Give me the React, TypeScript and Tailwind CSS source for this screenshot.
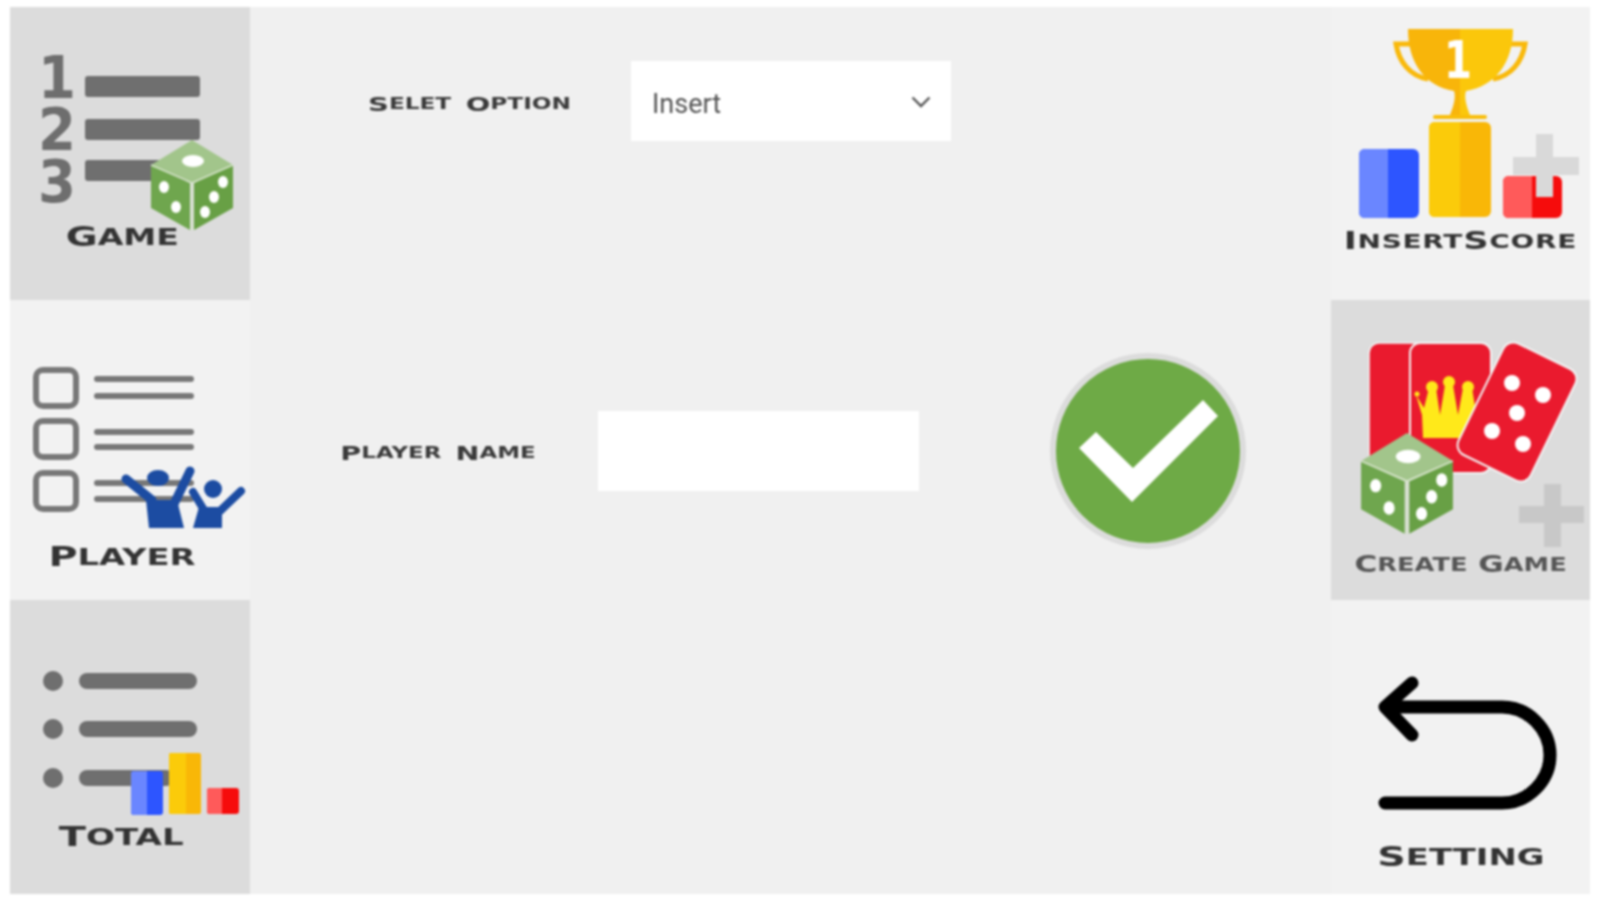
import React from "react";

const FONT = "[font-family:'DejaVu_Sans',sans-serif]";

function Caps({ big, rest, bigClass, restClass }: { big: string; rest: string; bigClass: string; restClass: string }) {
  return (
    <>
      <span className={bigClass}>{big}</span>
      <span className={`uppercase ${restClass}`}>{rest}</span>
    </>
  );
}

function Dice({ x, y, s }: { x: number; y: number; s: number }) {
  return (
    <g transform={`translate(${x} ${y}) scale(${s})`}>
      <path d="M0 0 L41 25 L0 43 L-41 25 Z" fill="#a2c58b" />
      <path d="M-41 25 L-2 43 V90 L-41 68 Z" fill="#6fa64e" />
      <path d="M41 25 L2 43 V90 L41 68 Z" fill="#68a045" />
      <path d="M-41 25 L0 43 L41 25 M0 43 V90" fill="none" stroke="#d4e3c8" strokeWidth="1.6" />
      <ellipse cx="1" cy="21" rx="11" ry="6" fill="#ffffff" />
      <ellipse cx="-28" cy="47" rx="5" ry="6" fill="#ffffff" />
      <ellipse cx="-16" cy="67" rx="5" ry="6" fill="#ffffff" />
      <ellipse cx="31" cy="42" rx="5" ry="6" fill="#ffffff" />
      <ellipse cx="22" cy="57" rx="5" ry="6" fill="#ffffff" />
      <ellipse cx="13" cy="72" rx="5" ry="6" fill="#ffffff" />
    </g>
  );
}

function Bar({ x, y, w, h, split, a, b, r = 4 }: { x: number; y: number; w: number; h: number; split: number; a: string; b: string; r?: number }) {
  return (
    <g>
      <rect x={x} y={y} width={w} height={h} rx={r} fill={b} />
      <path d={`M${split} ${y} H${x + r} Q${x} ${y} ${x} ${y + r} V${y + h - r} Q${x} ${y + h} ${x + r} ${y + h} H${split} Z`} fill={a} />
    </g>
  );
}

function GameIcon() {
  const bars = [76, 119, 160];
  return (
    <svg viewBox="10 7 240 218" className="block h-[218px] w-[240px] overflow-visible">
      <g fill="#6e6e6e" fontFamily="'DejaVu Sans', sans-serif" fontWeight="700" fontSize="58">
        <text x="38" y="98" textLength="38" lengthAdjust="spacingAndGlyphs">1</text>
        <text x="38" y="150" textLength="38" lengthAdjust="spacingAndGlyphs">2</text>
        <text x="38" y="202" textLength="38" lengthAdjust="spacingAndGlyphs">3</text>
      </g>
      {bars.map((y) => (
        <rect key={y} x="85" y={y} width="115" height="21" rx="3" fill="#6f6f6f" />
      ))}
      <Dice x={192} y={140} s={1} />
    </svg>
  );
}

function PlayerIcon() {
  const rows = [
    { box: 370, a: 379, b: 396 },
    { box: 421, a: 432, b: 447 },
    { box: 473, a: 483, b: 499 },
  ];
  return (
    <svg viewBox="10 300 240 245" className="block h-[245px] w-[240px] overflow-visible">
      {rows.map((r) => (
        <g key={r.box} stroke="#787878" fill="none" strokeLinecap="round">
          <rect x="36" y={r.box} width="40" height="36" rx="7" strokeWidth="6" />
          <path d={`M97 ${r.a} H191 M97 ${r.b} H191`} strokeWidth="6" />
        </g>
      ))}
      <g fill="#1c4ca2" stroke="#1c4ca2" strokeLinecap="round">
        <ellipse cx="158" cy="478" rx="11" ry="8" stroke="none" />
        <path d="M126 479 L152 500 M190 471 L172 508" fill="none" strokeWidth="9" />
        <path d="M146 500 H177 L184 528 H149 Z" stroke="none" />
        <circle cx="213" cy="489" r="9" stroke="none" />
        <path d="M193 492 L204 510 M241 491 L220 511" fill="none" strokeWidth="8" />
        <path d="M199 507 H222 V528 H193 Z" stroke="none" />
      </g>
    </svg>
  );
}

function TotalIcon() {
  return (
    <svg viewBox="10 600 240 224" className="block h-[224px] w-[240px] overflow-visible">
      {[681, 729, 778].map((y, i) => (
        <g key={y} fill="#6f6f6f">
          <circle cx="53" cy={y} r="10" />
          <rect x="79" y={y - 8} width={i === 2 ? 95 : 118} height="16" rx="8" />
        </g>
      ))}
      <Bar x={131} y={771} w={32} h={44} split={147} a="#6a86ff" b="#2d55ff" r={3} />
      <Bar x={169} y={753} w={32} h={61} split={186} a="#fbcb0a" b="#f9b707" r={2} />
      <Bar x={207} y={788} w={32} h={26} split={222} a="#ff5a5a" b="#f60c0c" r={3} />
    </svg>
  );
}

function ScoreIcon() {
  return (
    <svg viewBox="1331 7 259 221" className="block h-[221px] w-[259px] overflow-visible">
      <path d="M1410 44 H1396 C1399 62 1410 76 1428 79 M1511 44 H1525 C1522 62 1511 76 1493 79" fill="none" stroke="#f9b90a" strokeWidth="5" />
      <path d="M1408 29 H1460 V115 H1450 C1454 105 1456 97 1454 91 C1424 86 1408 62 1408 29 Z" fill="#f8b50a" />
      <path d="M1513 29 H1460 V115 H1470 C1466 105 1464 97 1466 91 C1496 86 1513 62 1513 29 Z" fill="#fbc70b" />
      <rect x="1433" y="115" width="54" height="4" rx="2" fill="#f9be0a" />
      <text x="1444" y="78" fontFamily="'DejaVu Sans', sans-serif" fontWeight="700" fontSize="52" fill="#ffffff" textLength="28" lengthAdjust="spacingAndGlyphs">1</text>
      <Bar x={1359} y={149} w={60} h={69} split={1388} a="#6a86ff" b="#2d55ff" r={6} />
      <Bar x={1429} y={122} w={62} h={95} split={1460} a="#fbcb0a" b="#f9b707" r={6} />
      <Bar x={1503} y={176} w={59} h={42} split={1532} a="#ff5a5a" b="#f60c0c" r={6} />
      <path d="M1536 134 H1553 V157 H1579 V175 H1553 V197 H1536 V175 H1513 V157 H1536 Z" fill="#d9d9d9" />
    </svg>
  );
}

function CreateIcon() {
  return (
    <svg viewBox="1331 300 259 251" className="block h-[251px] w-[259px] overflow-visible">
      <rect x="1369" y="343" width="60" height="128" rx="10" fill="#ea1a2e" stroke="#f3f3f3" strokeWidth="1.5" />
      <rect x="1410" y="343" width="81" height="130" rx="10" fill="#ea1a2e" stroke="#f3f3f3" strokeWidth="2" />
      <g fill="#ffe91a">
        <path d="M1423 438 L1422 415 L1416 395 L1424 408 L1429 388 L1436 388 L1440 415 L1445 385 L1453 385 L1458 415 L1463 388 L1472 388 L1480 438 Z" />
        <circle cx="1432" cy="387" r="6" />
        <circle cx="1449" cy="382" r="6" />
        <circle cx="1468" cy="387" r="6" />
        <circle cx="1417" cy="394" r="2.5" />
      </g>
      <g transform="rotate(26 1517 412)">
        <rect x="1477" y="350" width="80" height="124" rx="11" fill="#ea1a2e" stroke="#f3f3f3" strokeWidth="2" />
      </g>
      <g fill="#ffffff">
        <circle cx="1512" cy="383" r="8" />
        <circle cx="1543" cy="395" r="8" />
        <circle cx="1517" cy="413" r="8" />
        <circle cx="1492" cy="431" r="8" />
        <circle cx="1523" cy="444" r="8" />
      </g>
      <Dice x={1407} y={433} s={1.12} />
      <path d="M1544 484 H1561 V506 H1584 V523 H1561 V547 H1544 V523 H1519 V506 H1544 Z" fill="#c8c8c8" />
    </svg>
  );
}

function BackIcon() {
  return (
    <svg viewBox="1331 600 259 244" className="block h-[244px] w-[259px] overflow-visible">
      <path
        d="M1412 683 L1385 707 L1412 735 M1385 707 H1502 C1528 707 1550 729 1550 755 C1550 781 1528 803 1502 803 H1385"
        fill="none"
        stroke="#000000"
        strokeWidth="13"
        strokeLinecap="round"
        strokeLinejoin="round"
      />
    </svg>
  );
}

export default function App() {
  return (
    <div className="h-[900px] w-[1600px] overflow-hidden bg-white pl-[10px] pt-[7px]">
      <div className={`flex h-[887px] w-[1580px] bg-[#f0f0f0] blur-[0.8px] ${FONT}`}>
        <div className="flex w-[240px] shrink-0 flex-col">
          <div className="flex h-[293px] flex-col items-center bg-[#dcdcdc]">
            <GameIcon />
            <div className="mr-4 flex h-6 items-center whitespace-nowrap font-bold text-[#333333] scale-x-[1.44]">
              <Caps big="G" rest="ame" bigClass="text-[27px]" restClass="text-[23px]" />
            </div>
          </div>
          <div className="flex h-[300px] flex-col items-center bg-[#f2f2f2]">
            <PlayerIcon />
            <div className="mr-4 flex h-6 items-center whitespace-nowrap font-bold text-[#333333] scale-x-[1.47]">
              <Caps big="P" rest="layer" bigClass="text-[27px]" restClass="text-[23px]" />
            </div>
          </div>
          <div className="flex h-[294px] flex-col items-center bg-[#dcdcdc]">
            <TotalIcon />
            <div className="mr-[18px] mt-[1px] flex h-6 items-center whitespace-nowrap font-bold text-[#333333] scale-x-[1.48]">
              <Caps big="T" rest="otal" bigClass="text-[27px]" restClass="text-[23px]" />
            </div>
          </div>
        </div>

        <div className="flex min-w-0 flex-1 flex-col pt-[54px]">
          <div className="flex h-20 items-center pl-[119px]">
            <div className="mt-[6px] flex w-[201px] items-center justify-center whitespace-nowrap font-bold text-[#3a3a3a] scale-x-[1.45]">
              <Caps big="S" rest="elet" bigClass="text-[20px]" restClass="text-[16px]" />
              <span className="w-2.5" />
              <Caps big="O" rest="ption" bigClass="text-[20px]" restClass="text-[16px]" />
            </div>
            <div className="ml-[61px] flex h-20 w-[320px] items-center justify-between bg-white pl-[21px] pr-5 font-['Roboto',sans-serif] text-[27px] text-[#555555]">
              <span className="mt-[6px]">Insert</span>
              <svg viewBox="0 0 20 12" className="mt-[2px] h-3 w-5" fill="none" stroke="#555555" strokeWidth="2.4">
                <path d="M1.5 1.5 L10 10 L18.5 1.5" />
              </svg>
            </div>
          </div>
          <div className="mt-[270px] flex h-20 items-center pl-[93px]">
            <div className="mt-1 flex w-[190px] items-center justify-center whitespace-nowrap font-bold text-[#3a3a3a] scale-x-[1.43]">
              <Caps big="P" rest="layer" bigClass="text-[20px]" restClass="text-[16px]" />
              <span className="w-2.5" />
              <Caps big="N" rest="ame" bigClass="text-[20px]" restClass="text-[16px]" />
            </div>
            <input aria-label="Player Name" className="ml-[65px] h-20 w-[321px] bg-white outline-none" />
            <button className="ml-[131px] flex h-[196px] w-[196px] shrink-0 items-center justify-center rounded-full border-[6px] border-[#dcdcdc] bg-[#6eaa46]">
              <svg viewBox="1081 400 139 102" className="h-[102px] w-[139px] shrink-0">
                <path d="M1098 432 L1135 468 L1205 400 L1220 416 L1134 502 L1081 448 Z" fill="#ffffff" />
              </svg>
            </button>
          </div>
        </div>

        <div className="flex w-[259px] shrink-0 flex-col">
          <div className="flex h-[293px] flex-col items-center bg-[#f2f2f2]">
            <ScoreIcon />
            <div className="mt-[1px] flex h-6 items-center whitespace-nowrap font-bold text-[#333333] scale-x-[1.47] tracking-[0.5px]">
              <Caps big="I" rest="nsert" bigClass="text-[24px]" restClass="text-[19px]" />
              <Caps big="S" rest="core" bigClass="text-[24px]" restClass="text-[19px]" />
            </div>
          </div>
          <div className="flex h-[300px] flex-col items-center bg-[#dcdcdc]">
            <CreateIcon />
            <div className="mt-[1px] flex h-6 items-center whitespace-nowrap font-bold text-[#555555] scale-x-[1.35]">
              <Caps big="C" rest="reate" bigClass="text-[23px]" restClass="text-[19px]" />
              <span className="w-2" />
              <Caps big="G" rest="ame" bigClass="text-[23px]" restClass="text-[19px]" />
            </div>
          </div>
          <div className="flex h-[294px] flex-col items-center bg-[#f2f2f2]">
            <BackIcon />
            <div className="mt-[1px] flex h-6 items-center whitespace-nowrap font-bold text-[#333333] scale-x-[1.47]">
              <Caps big="S" rest="etting" bigClass="text-[27px]" restClass="text-[23px]" />
            </div>
          </div>
        </div>
      </div>
    </div>
  );
}
